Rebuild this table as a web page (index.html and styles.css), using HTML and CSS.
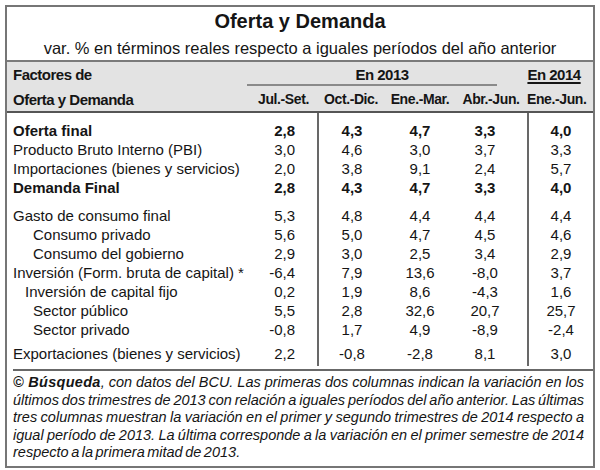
FILE: index.html
```html
<!DOCTYPE html>
<html lang="es">
<head>
<meta charset="utf-8">
<title>Oferta y Demanda</title>
<link rel="stylesheet" href="styles.css">
</head>
<body>
<div class="card">
  <div class="title">
    <h1>Oferta y Demanda</h1>
    <p>var. % en términos reales respecto a iguales períodos del año anterior</p>
  </div>
  <table class="data">
    <colgroup>
      <col class="w-lab"><col class="w-c1"><col class="w-c2"><col class="w-c3"><col class="w-c4"><col class="w-c5">
    </colgroup>
    <thead>
      <tr class="h1row">
        <th class="lab">Factores de</th>
        <th class="y13" colspan="4"><span class="y13-t">En 2013</span></th>
        <th class="y14"><span class="u">En 2014</span></th>
      </tr>
      <tr class="h2row">
        <th class="lab">Oferta y Demanda</th>
        <th class="hc">Jul.-Set.</th>
        <th class="hc">Oct.-Dic.</th>
        <th class="hc">Ene.-Mar.</th>
        <th class="hc">Abr.-Jun.</th>
        <th class="hc h5">Ene.-Jun.</th>
      </tr>
    </thead>
    <tbody>
      <tr class="b r-first"><td class="lab">Oferta final</td><td class="c1">2,8</td><td class="c2">4,3</td><td class="c3">4,7</td><td class="c4">3,3</td><td class="c5">4,0</td></tr>
      <tr><td class="lab">Producto Bruto Interno (PBI)</td><td class="c1">3,0</td><td class="c2">4,6</td><td class="c3">3,0</td><td class="c4">3,7</td><td class="c5">3,3</td></tr>
      <tr><td class="lab">Importaciones (bienes y servicios)</td><td class="c1">2,0</td><td class="c2">3,8</td><td class="c3">9,1</td><td class="c4">2,4</td><td class="c5">5,7</td></tr>
      <tr class="b"><td class="lab">Demanda Final</td><td class="c1">2,8</td><td class="c2">4,3</td><td class="c3">4,7</td><td class="c4">3,3</td><td class="c5">4,0</td></tr>
      <tr class="r-gap"><td class="lab">Gasto de consumo final</td><td class="c1">5,3</td><td class="c2">4,8</td><td class="c3">4,4</td><td class="c4">4,4</td><td class="c5">4,4</td></tr>
      <tr><td class="lab i2">Consumo privado</td><td class="c1">5,6</td><td class="c2">5,0</td><td class="c3">4,7</td><td class="c4">4,5</td><td class="c5">4,6</td></tr>
      <tr><td class="lab i2">Consumo del gobierno</td><td class="c1">2,9</td><td class="c2">3,0</td><td class="c3">2,5</td><td class="c4">3,4</td><td class="c5">2,9</td></tr>
      <tr><td class="lab">Inversión (Form. bruta de capital) *</td><td class="c1">-6,4</td><td class="c2">7,9</td><td class="c3">13,6</td><td class="c4">-8,0</td><td class="c5">3,7</td></tr>
      <tr><td class="lab i1">Inversión de capital fijo</td><td class="c1">0,2</td><td class="c2">1,9</td><td class="c3">8,6</td><td class="c4">-4,3</td><td class="c5">1,6</td></tr>
      <tr><td class="lab i2">Sector público</td><td class="c1">5,5</td><td class="c2">2,8</td><td class="c3">32,6</td><td class="c4">20,7</td><td class="c5">25,7</td></tr>
      <tr><td class="lab i2">Sector privado</td><td class="c1">-0,8</td><td class="c2">1,7</td><td class="c3">4,9</td><td class="c4">-8,9</td><td class="c5">-2,4</td></tr>
      <tr class="r-gap2 r-last"><td class="lab">Exportaciones (bienes y servicios)</td><td class="c1">2,2</td><td class="c2">-0,8</td><td class="c3">-2,8</td><td class="c4">8,1</td><td class="c5">3,0</td></tr>
    </tbody>
  </table>
  <div class="note">
    <span class="ln"><b>© Búsqueda</b>, con datos del BCU. Las primeras dos columnas indican la variación en los</span>
    <span class="ln">últimos dos trimestres de 2013 con relación a iguales períodos del año anterior. Las últimas</span>
    <span class="ln">tres columnas muestran la variación en el primer y segundo trimestres de 2014 respecto a</span>
    <span class="ln">igual período de 2013. La última corresponde a la variación en el primer semestre de 2014</span>
    <span class="ln last">respecto a la primera mitad de 2013.</span>
  </div>
</div>
</body>
</html>
```

FILE: styles.css
```css
html, body {
  margin: 0;
  background: #ffffff;
}
body {
  padding: 5px;
  font-family: "Liberation Sans", Arial, sans-serif;
  color: #151515;
}
.card {
  width: 586px;
  border: 2px solid #767676;
  background: #ffffff;
}
.title {
  text-align: center;
  border-bottom: 2px solid #7a7a7a;
  padding: 2px 0 2px;
}
.title h1 {
  margin: 0;
  font-size: 20px;
  line-height: 24px;
  font-weight: bold;
}
.title p {
  margin: 5px 0 0;
  font-size: 16.5px;
  line-height: 20px;
}
table.data {
  width: 586px;
  border-spacing: 0;
  table-layout: fixed;
}
.w-lab { width: 243px; }
.w-c1 { width: 67px; }
.w-c2 { width: 68px; }
.w-c3 { width: 70px; }
.w-c4 { width: 72px; }
.w-c5 { width: 66px; }

thead th {
  background: #e3e3e3;
  font-weight: bold;
  white-space: nowrap;
  vertical-align: top;
}
.h1row th {
  padding: 4px 0 4px;
  line-height: 18px;
  font-size: 15px;
  letter-spacing: -0.5px;
}
.h1row th.y13 {
  padding: 4px 0 2px;
  text-align: center;
}
.y13-t {
  display: block;
  margin: 0 30px 0 -3px;
  padding-left: 20px;
  border-bottom: 2px solid #8a8a8a;
}
.h1row th.y14 {
  text-align: center;
  padding-right: 12px;
}
.u {
  text-decoration: underline;
  text-decoration-thickness: 1.5px;
  text-underline-offset: 2px;
}
.h2row th {
  padding: 1px 0 1px;
  line-height: 21px;
  border-bottom: 2px solid #555555;
}
.h2row th.lab {
  font-size: 15px;
  letter-spacing: -0.5px;
}
.hc {
  font-size: 14px;
  letter-spacing: -0.4px;
  text-align: center;
}
.h2row th.h5 {
  padding-right: 18px;
}
th.lab, td.lab {
  text-align: left;
  padding-left: 6px;
}
tbody td {
  font-size: 15px;
  line-height: 19px;
  padding: 0;
  white-space: nowrap;
}
tbody tr.b td {
  font-weight: bold;
}
tbody tr.r-first td { padding-top: 8px; }
tbody tr.r-gap td { padding-top: 9px; }
tbody tr.r-gap2 td { padding-top: 5px; }
tbody tr.r-last td { padding-bottom: 3px; }
td.lab.i1 { padding-left: 18px; }
td.lab.i2 { padding-left: 26px; }
td.c1 {
  text-align: right;
  padding-right: 22px;
}
td.c2 {
  text-align: center;
  border-left: 2px solid #686868;
}
td.c3 {
  text-align: center;
}
td.c4 {
  text-align: center;
  padding-right: 12px;
}
td.c5 {
  text-align: center;
  border-left: 2px solid #686868;
}
.note {
  margin: 3px 0 0 6px;
  border-top: 2px solid #686868;
  padding: 3px 9px 4px 0;
  font-style: italic;
  font-size: 14.5px;
  line-height: 17.5px;
  word-spacing: -1.5px;
}
.note b {
  font-weight: bold;
  letter-spacing: 0.3px;
}
.ln {
  display: block;
  text-align: justify;
  text-align-last: justify;
}
.ln.last {
  text-align-last: left;
}
```
